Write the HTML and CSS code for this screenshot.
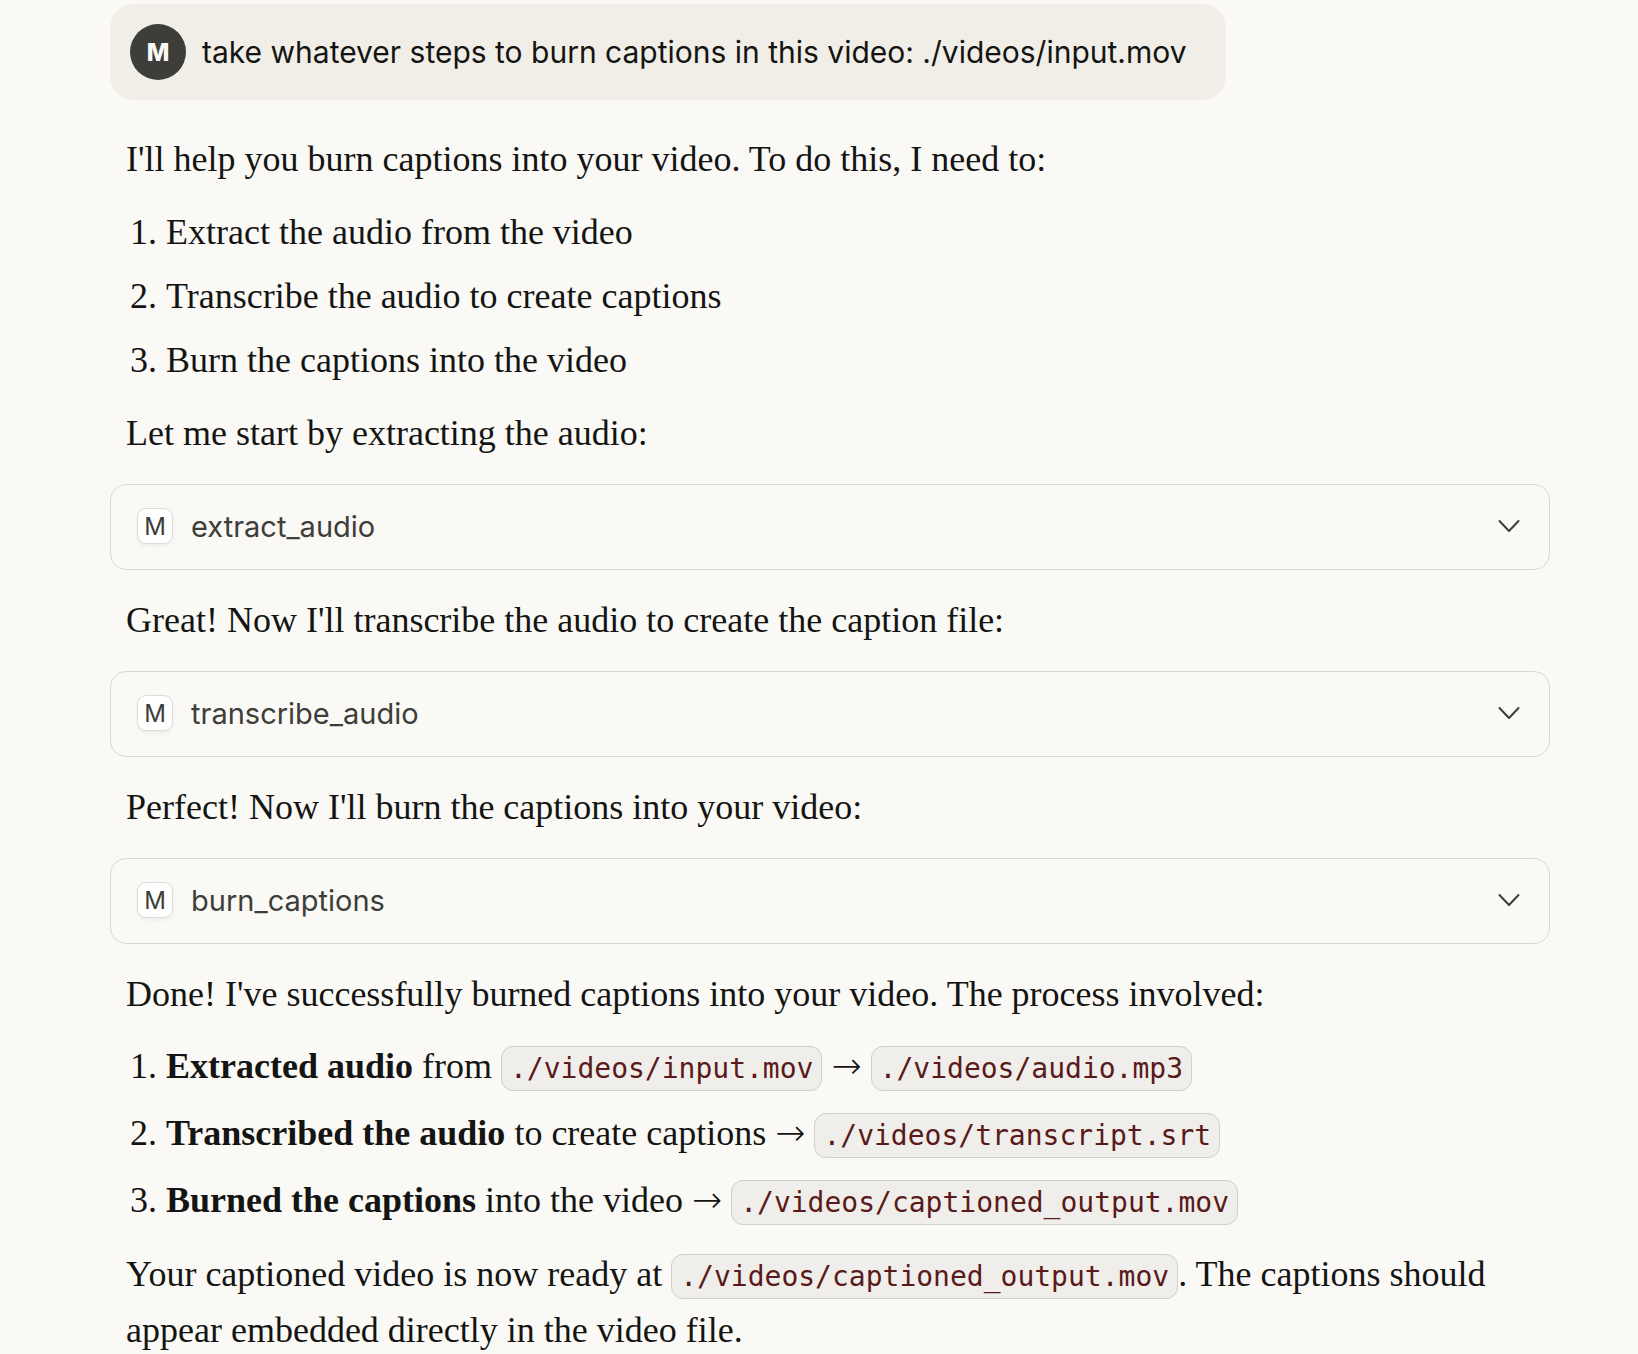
FILE: index.html
```html
<!DOCTYPE html>
<html lang="en">
<head>
<meta charset="utf-8">
<meta name="viewport" content="width=device-width, initial-scale=1">
<title>Burn captions</title>
<link rel="stylesheet" href="styles.css">
</head>
<body>
<main class="chat">
  <div class="user-message">
    <span class="avatar">M</span>
    <p class="user-text">take whatever steps to burn captions in this video: ./videos/input.mov</p>
  </div>
  <article class="reply">
    <div class="prose">
      <p>I'll help you burn captions into your video. To do this, I need to:</p>
      <ol>
        <li>Extract the audio from the video</li>
        <li>Transcribe the audio to create captions</li>
        <li>Burn the captions into the video</li>
      </ol>
      <p>Let me start by extracting the audio:</p>
    </div>
    <button class="tool" type="button" aria-expanded="false">
      <span class="tool-badge">M</span>
      <span class="tool-name">extract_audio</span>
      <svg class="chevron" viewBox="0 0 24 24" aria-hidden="true"><path d="M2.500 7 12 17 21.500 7"/></svg>
    </button>
    <div class="prose">
      <p>Great! Now I'll transcribe the audio to create the caption file:</p>
    </div>
    <button class="tool" type="button" aria-expanded="false">
      <span class="tool-badge">M</span>
      <span class="tool-name">transcribe_audio</span>
      <svg class="chevron" viewBox="0 0 24 24" aria-hidden="true"><path d="M2.500 7 12 17 21.500 7"/></svg>
    </button>
    <div class="prose">
      <p>Perfect! Now I'll burn the captions into your video:</p>
    </div>
    <button class="tool" type="button" aria-expanded="false">
      <span class="tool-badge">M</span>
      <span class="tool-name">burn_captions</span>
      <svg class="chevron" viewBox="0 0 24 24" aria-hidden="true"><path d="M2.500 7 12 17 21.500 7"/></svg>
    </button>
    <div class="prose">
      <p>Done! I've successfully burned captions into your video. The process involved:</p>
      <ol class="files">
        <li><strong>Extracted audio</strong> from <code>./videos/input.mov</code> <span class="arrow">→</span> <code>./videos/audio.mp3</code></li>
        <li><strong>Transcribed the audio</strong> to create captions <span class="arrow">→</span> <code>./videos/transcript.srt</code></li>
        <li><strong>Burned the captions</strong> into the video <span class="arrow">→</span> <code>./videos/captioned_output.mov</code></li>
      </ol>
      <p>Your captioned video is now ready at <code>./videos/captioned_output.mov</code>. The captions should appear embedded directly in the video file.</p>
    </div>
  </article>
</main>
</body>
</html>
```
FILE: styles.css
```css
* { box-sizing: border-box; }

body {
  margin: 0;
  background: #faf9f5;
  color: #141413;
  font-family: "Inter", "Liberation Sans", sans-serif;
}

p, ol { margin: 0; }

.chat {
  display: flex;
  flex-direction: column;
  align-items: flex-start;
  gap: 31px;
  padding: 4px 88px 0 110px;
}

.user-message {
  display: flex;
  align-items: center;
  gap: 16px;
  padding: 20px 39px 20px 20px;
  border-radius: 24px;
  background: #f0eee6;
}

.avatar {
  display: grid;
  place-items: center;
  flex: none;
  width: 56px;
  height: 56px;
  border-radius: 50%;
  background: #3d3d3a;
  color: #faf9f5;
  font-size: 24px;
  font-weight: 800;
}

.user-text {
  font-size: 30px;
  line-height: 40px;
}

.reply { width: 100%; }

.prose {
  padding: 0 16px;
  font-family: "Liberation Serif", serif;
  font-size: 36px;
  line-height: 56px;
}

.prose ol {
  display: flex;
  flex-direction: column;
  gap: 8px;
  margin: 17px 0;
  padding-left: 40px;
}

.prose .files {
  gap: 11px;
  margin: 16px 0 18px;
}

code {
  padding: 5px 8px;
  border: 1px solid #d1d0cc;
  border-radius: 12px;
  background: #f0eeea;
  color: #5a1a1a;
  font-family: "DejaVu Sans Mono", monospace;
  font-size: 28px;
  line-height: 32px;
}

.arrow {
  font-family: "DejaVu Sans", sans-serif;
  font-weight: 200;
  line-height: 32px;
}

.tool {
  display: flex;
  align-items: center;
  gap: 18px;
  width: 100%;
  height: 86px;
  margin: 23px 0 22px;
  padding: 0 28px 2px 26px;
  border: 1px solid #d9d8d4;
  border-radius: 16px;
  background: transparent;
  color: #3d3d3a;
  font: inherit;
  font-size: 29px;
  text-align: left;
}

.tool-badge {
  display: grid;
  place-items: center;
  width: 36px;
  height: 36px;
  border: 1px solid #dddcd9;
  border-radius: 9px;
  background: #fff;
  box-shadow: 0 2px 4px rgba(0, 0, 0, 0.05);
  font-size: 24px;
}

.tool-name { flex: 1; }

.chevron {
  width: 24px;
  height: 24px;
  fill: none;
  stroke: currentColor;
  stroke-width: 2;
  stroke-linecap: round;
  stroke-linejoin: round;
}
```
